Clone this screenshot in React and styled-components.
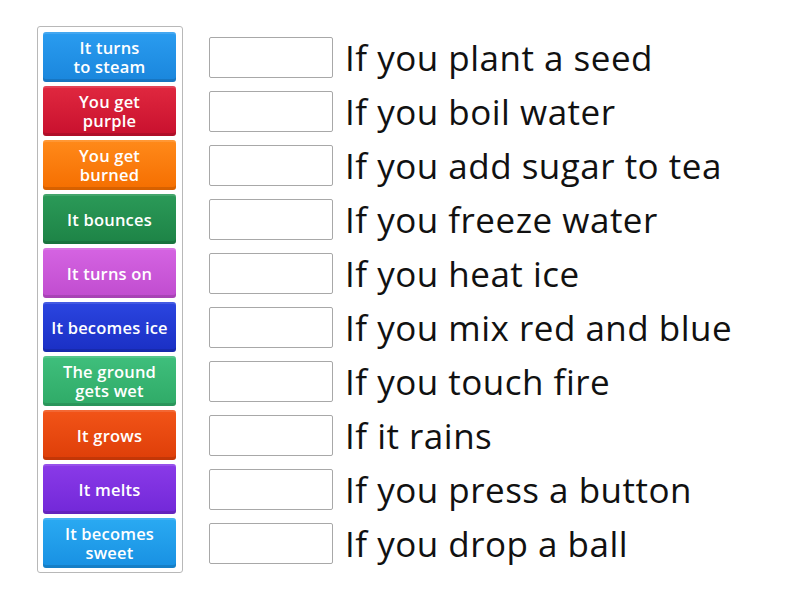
import React from "react";
import styled, { createGlobalStyle } from "styled-components";

const Global = createGlobalStyle`
  html, body { margin: 0; padding: 0; background: #fff; }
  body { font-family: "Open Sans", "Noto Sans", sans-serif; }
`;

const Page = styled.div`
  width: 800px;
  height: 600px;
  display: flex;
  align-items: flex-start;
  padding: 26px 0 0 37px;
  box-sizing: border-box;
  gap: 26px;
`;

const Bank = styled.div`
  width: 146px;
  box-sizing: border-box;
  border: 1px solid #b8b8b8;
  border-radius: 3px;
  padding: 5px 6px 4px 5px;
  display: flex;
  flex-direction: column;
  gap: 4px;
`;

const Tile = styled.div`
  height: 50px;
  border-radius: 3px;
  background: linear-gradient(to bottom, ${(p) => p.$top}, ${(p) => p.$bottom});
  box-shadow: inset 0 -3px 0 rgba(0, 0, 0, 0.12), inset 0 2px 0 rgba(255, 255, 255, 0.12);
  color: #fff;
  display: flex;
  align-items: center;
  justify-content: center;
  text-align: center;
  font-family: "Open Sans", "Noto Sans", sans-serif;
  font-weight: 600;
  font-size: 16.5px;
  line-height: 19px;
  letter-spacing: 0.2px;
  padding: 0 1px;
  white-space: nowrap;
`;

const Line = styled.span`
  display: block;
`;

const Rows = styled.div`
  display: flex;
  flex-direction: column;
  gap: 13px;
  padding-top: 11px;
`;

const Row = styled.div`
  display: flex;
  align-items: center;
  gap: 12px;
  height: 41px;
`;

const Slot = styled.div`
  width: 124px;
  height: 41px;
  box-sizing: border-box;
  border: 1px solid #a8a8a8;
  border-radius: 2px;
  background: #fff;
  flex: none;
`;

const Prompt = styled.div`
  font-family: "Open Sans", "Noto Sans", sans-serif;
  font-size: 35px;
  color: #111;
  line-height: 41px;
  white-space: nowrap;
  letter-spacing: 0.5px;
`;

const tiles = [
  ["It turns\nto steam", "#2a9cf0", "#1a86dc"],
  ["You get\npurple", "#e0283f", "#c8102e"],
  ["You get\nburned", "#ff8a1a", "#f56e00"],
  ["It bounces", "#2b9a58", "#1d8346"],
  ["It turns on", "#d564e2", "#c04ccf"],
  ["It becomes ice", "#2b45e0", "#1a2fc4"],
  ["The ground\ngets wet", "#3fbf7c", "#2faa67"],
  ["It grows", "#f25418", "#de3e08"],
  ["It melts", "#8a3ae8", "#7228d8"],
  ["It becomes\nsweet", "#2aaaf2", "#1890e2"],
];

const prompts = [
  "If you plant a seed",
  "If you boil water",
  "If you add sugar to tea",
  "If you freeze water",
  "If you heat ice",
  "If you mix red and blue",
  "If you touch fire",
  "If it rains",
  "If you press a button",
  "If you drop a ball",
];

export default function App() {
  return (
    <>
      <Global />
      <Page>
        <Bank>
          {tiles.map(([t, a, b]) => (
            <Tile key={t} $top={a} $bottom={b}>
              <div>
                {t.split("\n").map((l, i) => (
                  <Line key={i}>{l}</Line>
                ))}
              </div>
            </Tile>
          ))}
        </Bank>
        <Rows>
          {prompts.map((p) => (
            <Row key={p}>
              <Slot />
              <Prompt>{p}</Prompt>
            </Row>
          ))}
        </Rows>
      </Page>
    </>
  );
}
